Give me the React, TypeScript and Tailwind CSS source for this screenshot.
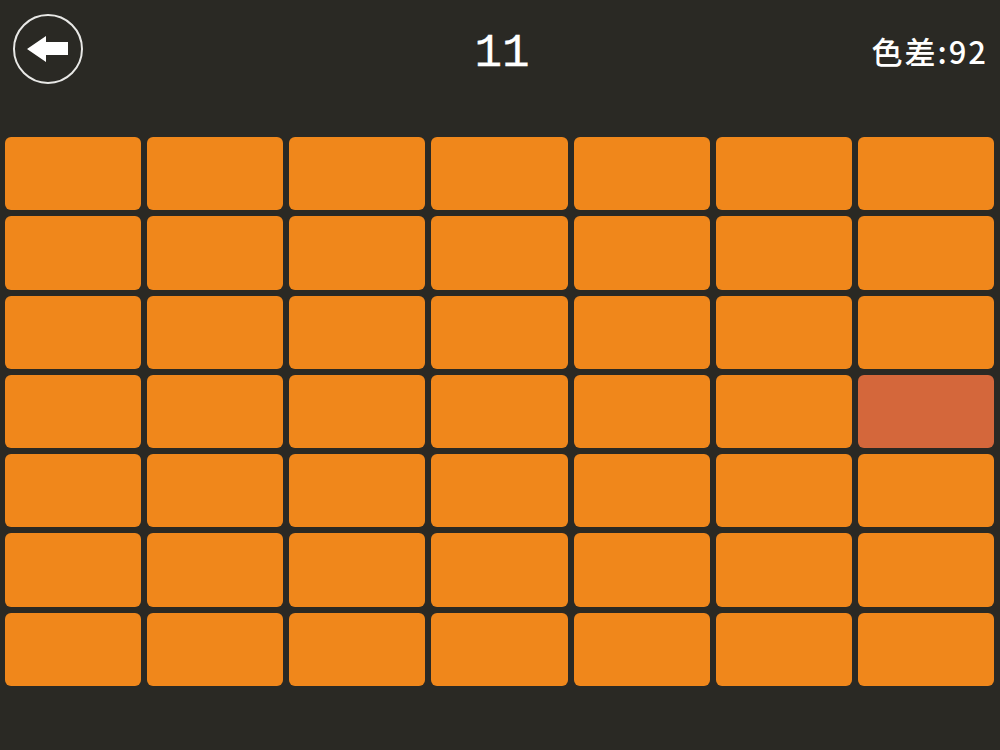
import React from 'react';

const ROWS = 7;
const COLS = 7;
const ODD_ROW = 3;
const ODD_COL = 6;

export default function App() {
  const cells: { odd: boolean; key: string }[] = [];
  for (let r = 0; r < ROWS; r++) {
    for (let c = 0; c < COLS; c++) {
      cells.push({ odd: r === ODD_ROW && c === ODD_COL, key: `${r}-${c}` });
    }
  }

  return (
    <div className="h-[750px] w-[1000px] overflow-hidden bg-[#2a2924]">
      {/* Header */}
      <header className="relative h-[137px]">
        <button className="absolute left-[13px] top-[14px] flex h-[70px] w-[70px] items-center justify-center rounded-full border-2 border-[#e8e8e6]">
          <svg width="42" height="26" viewBox="0 0 42 26" className="-ml-[1px]">
            <path d="M0 13 L19 0 L19 6 L41 6 L41 19 L19 19 L19 26 Z" fill="#ffffff" />
          </svg>
        </button>
        <div
          className="absolute left-[4px] right-0 top-[26px] text-center text-[46px] leading-[56px] text-white [-webkit-text-stroke:0.3px_white]"
          style={{ fontFamily: '"Liberation Mono", monospace' }}
        >
          11
        </div>
        <div
          className="absolute right-[12px] top-[29px] text-[31px] font-medium leading-[44px] tracking-[2px] text-white"
          style={{ fontFamily: '"Noto Sans CJK SC", sans-serif' }}
        >
          色差:92
        </div>
      </header>

      {/* Board */}
      <div className="ml-[5px] mr-[6px] grid h-[549px] grid-cols-7 grid-rows-7 gap-[6px]">
        {cells.map((cell) => (
          <div
            key={cell.key}
            className={`rounded-[6px] ${cell.odd ? 'bg-[#d4673b]' : 'bg-[#f0871b]'}`}
          />
        ))}
      </div>
    </div>
  );
}
